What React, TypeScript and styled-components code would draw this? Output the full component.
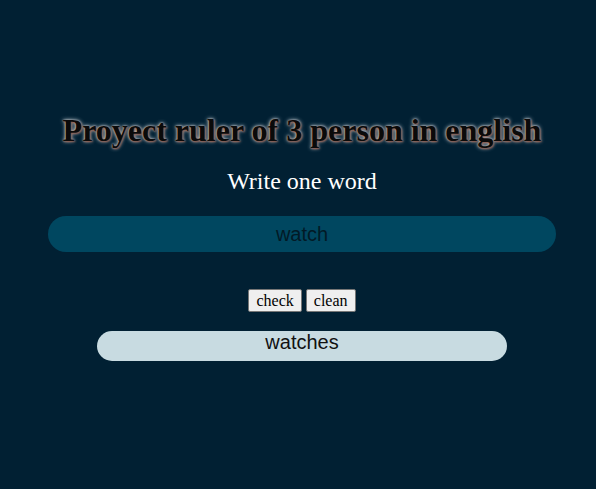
import React from "react";
import styled, { createGlobalStyle } from "styled-components";

const Global = createGlobalStyle`
  html, body { margin: 0; padding: 0; }
  body {
    background: #012033;
    min-height: 489px;
    font-family: "Liberation Serif", "Times New Roman", serif;
  }
`;

const Page = styled.div`
  display: flex;
  flex-direction: column;
  align-items: center;
  padding: 112px 40px 0 48px;
`;

const Title = styled.h1`
  margin: 0;
  font-size: 32px;
  font-weight: bold;
  color: #0a0a0a;
  text-shadow: 1px 1px 2px #8a5040, 0 0 4px #dfe6ec, 0 0 2px #dfe6ec;
  line-height: 37px;
`;

const Prompt = styled.p`
  margin: 18px 0 0;
  font-size: 24px;
  color: #ffffff;
  line-height: 28px;
`;

const WordInput = styled.input`
  margin-top: 21px;
  width: 508px;
  height: 36px;
  box-sizing: border-box;
  border: none;
  border-radius: 18px;
  background: #004760;
  color: #021a26;
  font-family: "Liberation Sans", Arial, sans-serif;
  font-size: 20px;
  text-align: center;
  outline: none;
  padding: 0;
`;

const Buttons = styled.div`
  display: flex;
  gap: 4px;
  margin-top: 37px;
`;

const Btn = styled.button`
  height: 23px;
  padding: 0 7px;
  font-family: "Liberation Serif", "Times New Roman", serif;
  font-size: 16px;
  line-height: 18px;
  color: #000;
  background: #efefef;
  border: 1px solid #767676;
  border-radius: 2px;
`;

const Result = styled.div`
  margin-top: 19px;
  width: 410px;
  height: 30px;
  border-radius: 15px;
  background: #c8dbe1;
  color: #111;
  font-family: "Liberation Sans", Arial, sans-serif;
  font-size: 20px;
  text-align: center;
  line-height: 23px;
`;

export default function App() {
  return (
    <>
      <Global />
      <Page>
        <Title>Proyect ruler of 3 person in english</Title>
        <Prompt>Write one word</Prompt>
        <WordInput defaultValue="watch" />
        <Buttons>
          <Btn>check</Btn>
          <Btn>clean</Btn>
        </Buttons>
        <Result>watches</Result>
      </Page>
    </>
  );
}
